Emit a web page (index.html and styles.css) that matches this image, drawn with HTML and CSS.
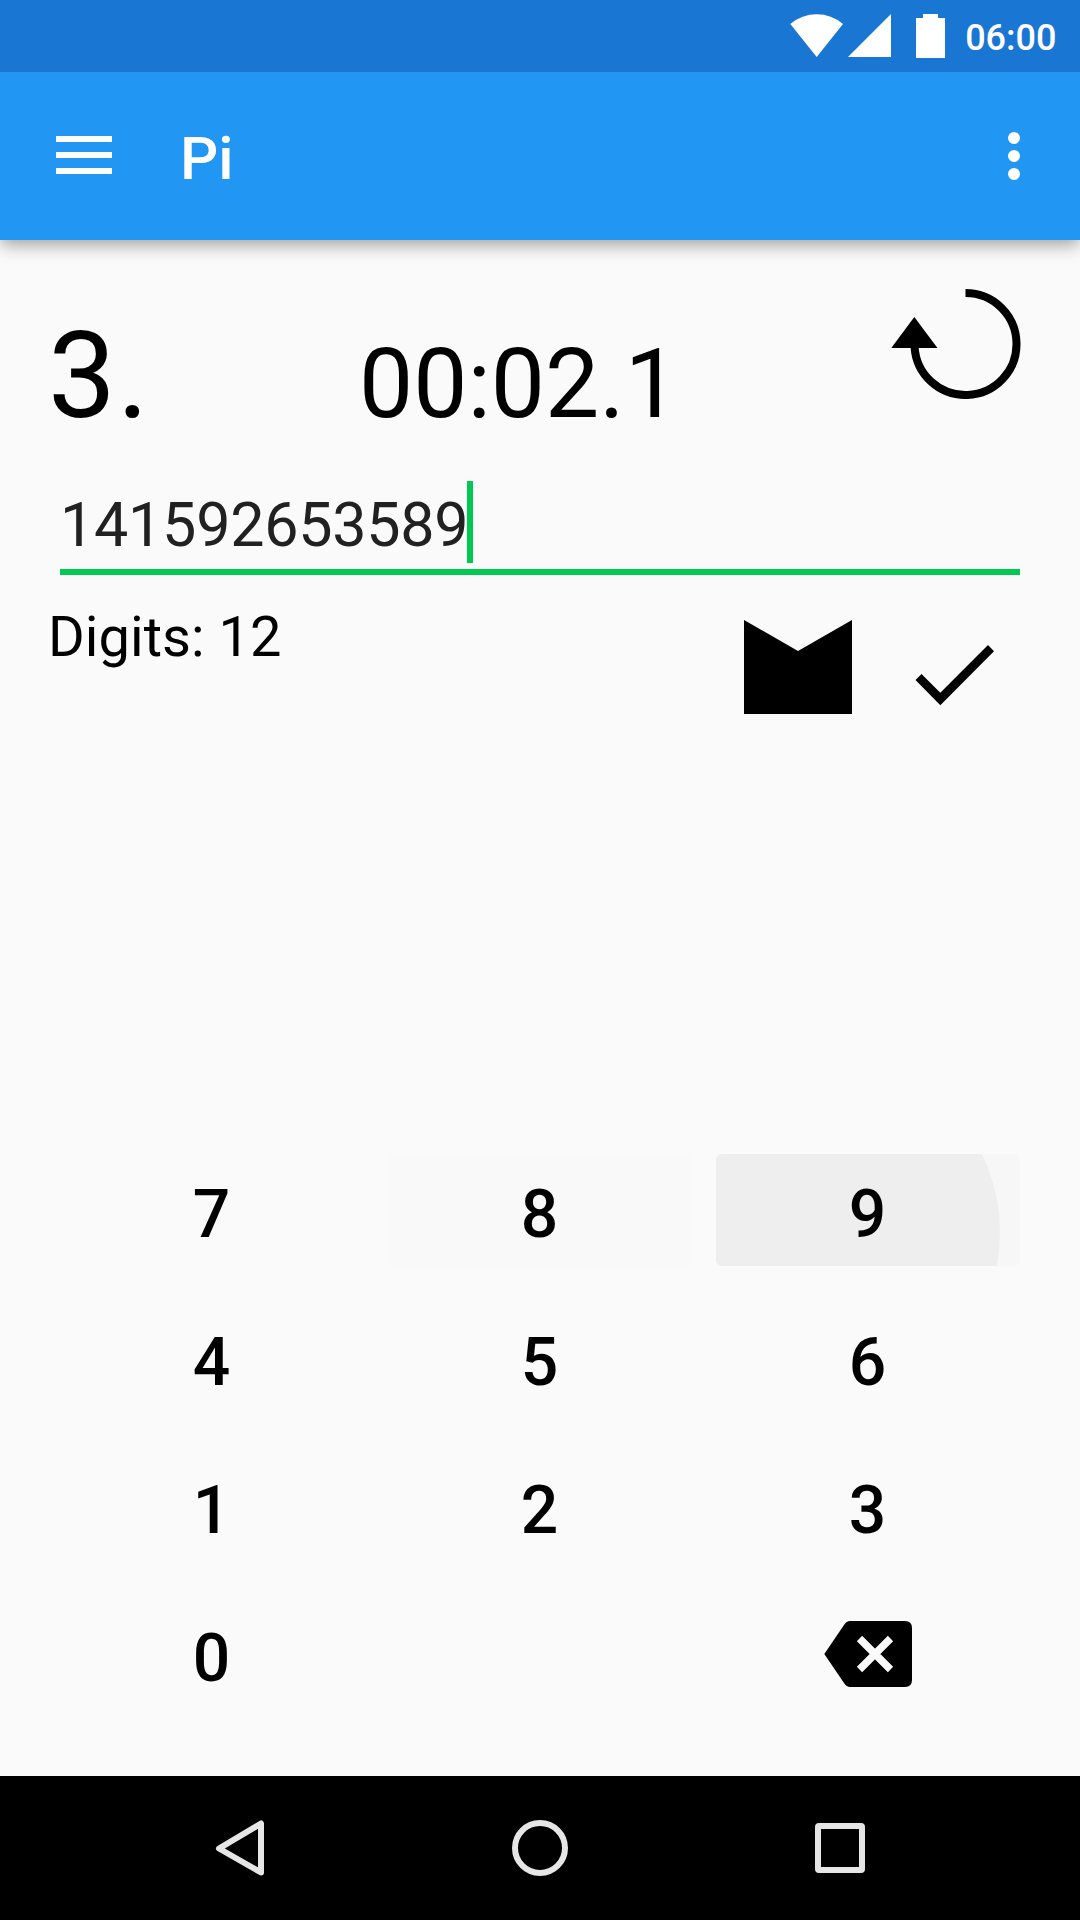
FILE: index.html
```html
<!DOCTYPE html>
<html lang="en">
<head>
<meta charset="utf-8">
<title>Pi</title>
<link rel="stylesheet" href="styles.css">
</head>
<body>
<div class="screen">
  <div class="status-bar">
    <svg class="wifi" width="54" height="44" viewBox="0 0 54 44"><path d="M0.3 10Q12 .3 26.7.3T53 10L26.7 43Z" fill="#fff"/></svg>
    <svg class="signal" width="43" height="43" viewBox="0 0 43 43"><path d="M0 43H43V0Z" fill="#fff"/></svg>
    <svg class="battery" width="29" height="44" viewBox="0 0 29 44"><path d="M0 4H7V0H22V4H29V44H0Z" fill="#fff"/></svg>
    <span class="clock">06:00</span>
  </div>
  <header class="app-bar">
    <svg class="menu" width="56" height="38" viewBox="0 0 56 38"><path d="M0 0H56V6H0ZM0 16H56V22H0ZM0 32H56V38H0Z" fill="#fff"/></svg>
    <h1 class="title">Pi</h1>
    <svg class="more" width="12" height="48" viewBox="0 0 12 48" fill="#fff"><circle cx="6" cy="6" r="6"/><circle cx="6" cy="24" r="6"/><circle cx="6" cy="42" r="6"/></svg>
  </header>
  <main class="content">
    <section class="head">
      <span class="whole">3.</span>
      <span class="timer">00:02.1</span>
      <svg class="restart" width="130" height="111" viewBox="0 0 130 111"><path d="M74.5 4A51 51 0 1 1 23.6 58" fill="none" stroke="#000" stroke-width="8"/><path d="M0.3 59L23.3 28L46.5 59Z"/></svg>
    </section>
    <div class="field"><span class="value">141592653589</span><span class="cursor"></span></div>
    <section class="info">
      <span class="digits">Digits: 12</span>
      <svg class="mail" width="108" height="94" viewBox="0 0 108 94"><path d="M0 0L54 31L108 0V94H0Z"/></svg>
      <svg class="check" width="79" height="61" viewBox="0 0 79 61"><path d="M.5 35L6.5 29L25.3 47.8L73 0L79 6.2L25.3 60.2Z"/></svg>
    </section>
    <section class="keypad">
      <div class="key">7</div><div class="key fading">8</div>
      <div class="key pressed">
        <svg class="ripple" width="304" height="112" viewBox="0 0 304 112"><circle cx="108" cy="78" r="176" fill="#eee"/></svg>
        <span class="label">9</span>
      </div>
      <div class="key">4</div><div class="key">5</div><div class="key">6</div>
      <div class="key">1</div><div class="key">2</div><div class="key">3</div>
      <div class="key">0</div><div></div>
      <div class="key erase">
        <svg width="88" height="66" viewBox="0 0 88 66"><path d="M26 0H81Q88 0 88 7V59Q88 66 81 66H26Q22.500 66 20 62L.3 33L20 4Q22.500 0 26 0Z"/><path d="M35.500 17.500L66.500 48.500M66.500 17.500L35.500 48.500" stroke="#fafafa" stroke-width="7.500"/></svg>
      </div>
    </section>
  </main>
  <nav class="nav-bar">
    <svg width="56" height="56" viewBox="0 0 56 56"><path d="M49 3.500V52.500L7 28.500Z"/></svg>
    <svg width="56" height="56" viewBox="0 0 56 56"><circle cx="28" cy="28" r="25"/></svg>
    <svg width="56" height="56" viewBox="0 0 56 56"><rect x="6" y="6" width="44" height="44" rx="1"/></svg>
  </nav>
</div>
</body>
</html>
```
FILE: styles.css
```css
* { box-sizing: border-box; }
body { margin: 0; font-family: Roboto, sans-serif; color: #000; }
svg { display: block; flex: none; }
.screen { width: 1080px; height: 1920px; display: flex; flex-direction: column; background: #fafafa; overflow: hidden; }

.status-bar { z-index: 1; height: 72px; flex: none; display: flex; justify-content: flex-end; align-items: flex-start; padding: 14px 24px 0 0; background: #1976d2; color: #fff; }
.signal { margin-left: 4px; }
.battery { margin-left: 25px; }
.clock { margin-left: 20.5px; margin-right: -.5px; font-size: 36px; font-weight: 500; line-height: 48px; }

.app-bar { height: 168px; flex: none; display: flex; align-items: center; padding: 0 60px 0 56px; background: #2196f3; color: #fff; box-shadow: 0 6px 16px -1px rgba(0, 0, 0, .36); }
.menu { margin-bottom: 2px; }
.title { margin: 6px 0 0 68px; font-size: 60px; font-weight: 500; line-height: 72px; }
.more { margin-left: auto; }

.content { flex: 1; display: flex; flex-direction: column; padding: 48px 48px 66px; }
.head { height: 193px; display: flex; align-items: baseline; padding-top: 18px; }
.whole { width: 311px; font-size: 121px; line-height: 140px; letter-spacing: 1px; }
.timer { font-size: 96.5px; line-height: 112px; }
.restart { align-self: flex-start; margin: -17px 11px 0 auto; }

.field { height: 94px; margin: 0 12px; display: flex; align-items: flex-start; border-bottom: 6px solid #00c853; }
.value { padding-top: 7px; font-size: 61px; line-height: 74px; letter-spacing: -.25px; color: #212121; }
.cursor { width: 6px; height: 82px; margin-left: -1px; background: #00c853; }

.info { display: flex; align-items: flex-start; }
.digits { margin-top: 29px; font-size: 56px; line-height: 66px; letter-spacing: .05px; }
.mail { margin: 45px 0 0 auto; }
.check { margin: 70px 38px 0 63px; }

.keypad { margin: auto 12px 0; display: grid; grid-template-columns: repeat(3, 304px); grid-auto-rows: 112px; gap: 36px 24px; }
.key { display: grid; place-items: center; padding: 10px 1px 0 0; border-radius: 6px; font-size: 66px; font-weight: 500; line-height: 78px; }
.fading { background: #f9f9f9; }
.pressed { position: relative; overflow: hidden; background: #f7f7f7; }
.ripple { position: absolute; inset: 0; }
.label { position: relative; }
.erase { padding: 0; }

.nav-bar { height: 144px; flex: none; display: flex; justify-content: center; align-items: center; gap: 244px; background: #000; }
.nav-bar svg { fill: none; stroke: #e6e6e6; stroke-width: 6; stroke-linejoin: round; }
```
